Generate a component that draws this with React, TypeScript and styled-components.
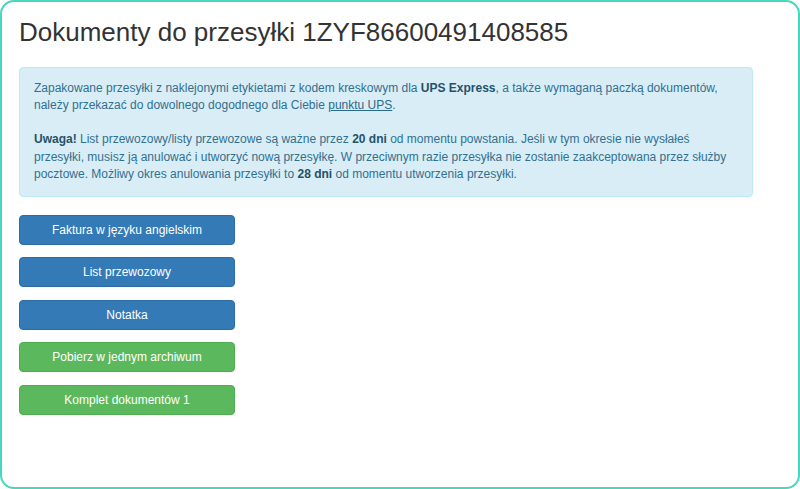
import React from "react";
import styled, { createGlobalStyle } from "styled-components";

const Global = createGlobalStyle`
  html, body { margin: 0; padding: 0; background: #fff; }
  body { font-family: "Liberation Sans", Arial, Helvetica, sans-serif; color: #333; }
  * { box-sizing: border-box; }
`;

const Frame = styled.div`
  width: 800px;
  height: 489px;
  border: 2px solid #45d8bd;
  border-radius: 14px;
  padding: 0 17px;
  overflow: hidden;
`;

const Title = styled.h1`
  font-size: 26px;
  font-weight: 400;
  margin: 14px 0 0;
  line-height: 32px;
  color: #333;
`;

const Alert = styled.div`
  width: 734px;
  margin-top: 19px;
  padding: 12px 14px 13px;
  background: #d9edf7;
  border: 1px solid #bce8f1;
  border-radius: 4px;
  color: #31708f;
  font-size: 12px;
  line-height: 17.14px;
`;

const Para = styled.p`
  margin: 0;
  & + & { margin-top: 17.14px; }
  b { font-weight: 700; color: #245269; }
  a { color: #2a6a8c; text-decoration: underline; }
`;

const Buttons = styled.div`
  display: flex;
  flex-direction: column;
  gap: 12.5px;
  margin-top: 18px;
  width: 216px;
`;

const Btn = styled.button<{ $variant: "primary" | "success" }>`
  height: 30px;
  width: 216px;
  border-radius: 4px;
  font-family: "Liberation Sans", Arial, sans-serif;
  font-size: 12px;
  color: #fff;
  cursor: pointer;
  padding: 0 10px;
  background: ${(p) => (p.$variant === "primary" ? "#337ab7" : "#5cb85c")};
  border: 1px solid ${(p) => (p.$variant === "primary" ? "#2e6da4" : "#4cae4c")};
`;

const buttons: { label: string; variant: "primary" | "success" }[] = [
  { label: "Faktura w języku angielskim", variant: "primary" },
  { label: "List przewozowy", variant: "primary" },
  { label: "Notatka", variant: "primary" },
  { label: "Pobierz w jednym archiwum", variant: "success" },
  { label: "Komplet dokumentów 1", variant: "success" },
];

export default function App() {
  return (
    <>
      <Global />
      <Frame>
        <Title>Dokumenty do przesyłki 1ZYF86600491408585</Title>
        <Alert>
          <Para>
            Zapakowane przesyłki z naklejonymi etykietami z kodem kreskowym dla <b>UPS Express</b>, a także wymaganą paczką dokumentów, należy przekazać do dowolnego dogodnego dla Ciebie <a href="#">punktu UPS</a>.
          </Para>
          <Para>
            <b>Uwaga!</b> List przewozowy/listy przewozowe są ważne przez <b>20 dni</b> od momentu powstania. Jeśli w tym okresie nie wysłałeś przesyłki, musisz ją anulować i utworzyć nową przesyłkę. W przeciwnym razie przesyłka nie zostanie zaakceptowana przez służby pocztowe. Możliwy okres anulowania przesyłki to <b>28 dni</b> od momentu utworzenia przesyłki.
          </Para>
        </Alert>
        <Buttons>
          {buttons.map((b) => (
            <Btn key={b.label} $variant={b.variant}>{b.label}</Btn>
          ))}
        </Buttons>
      </Frame>
    </>
  );
}
